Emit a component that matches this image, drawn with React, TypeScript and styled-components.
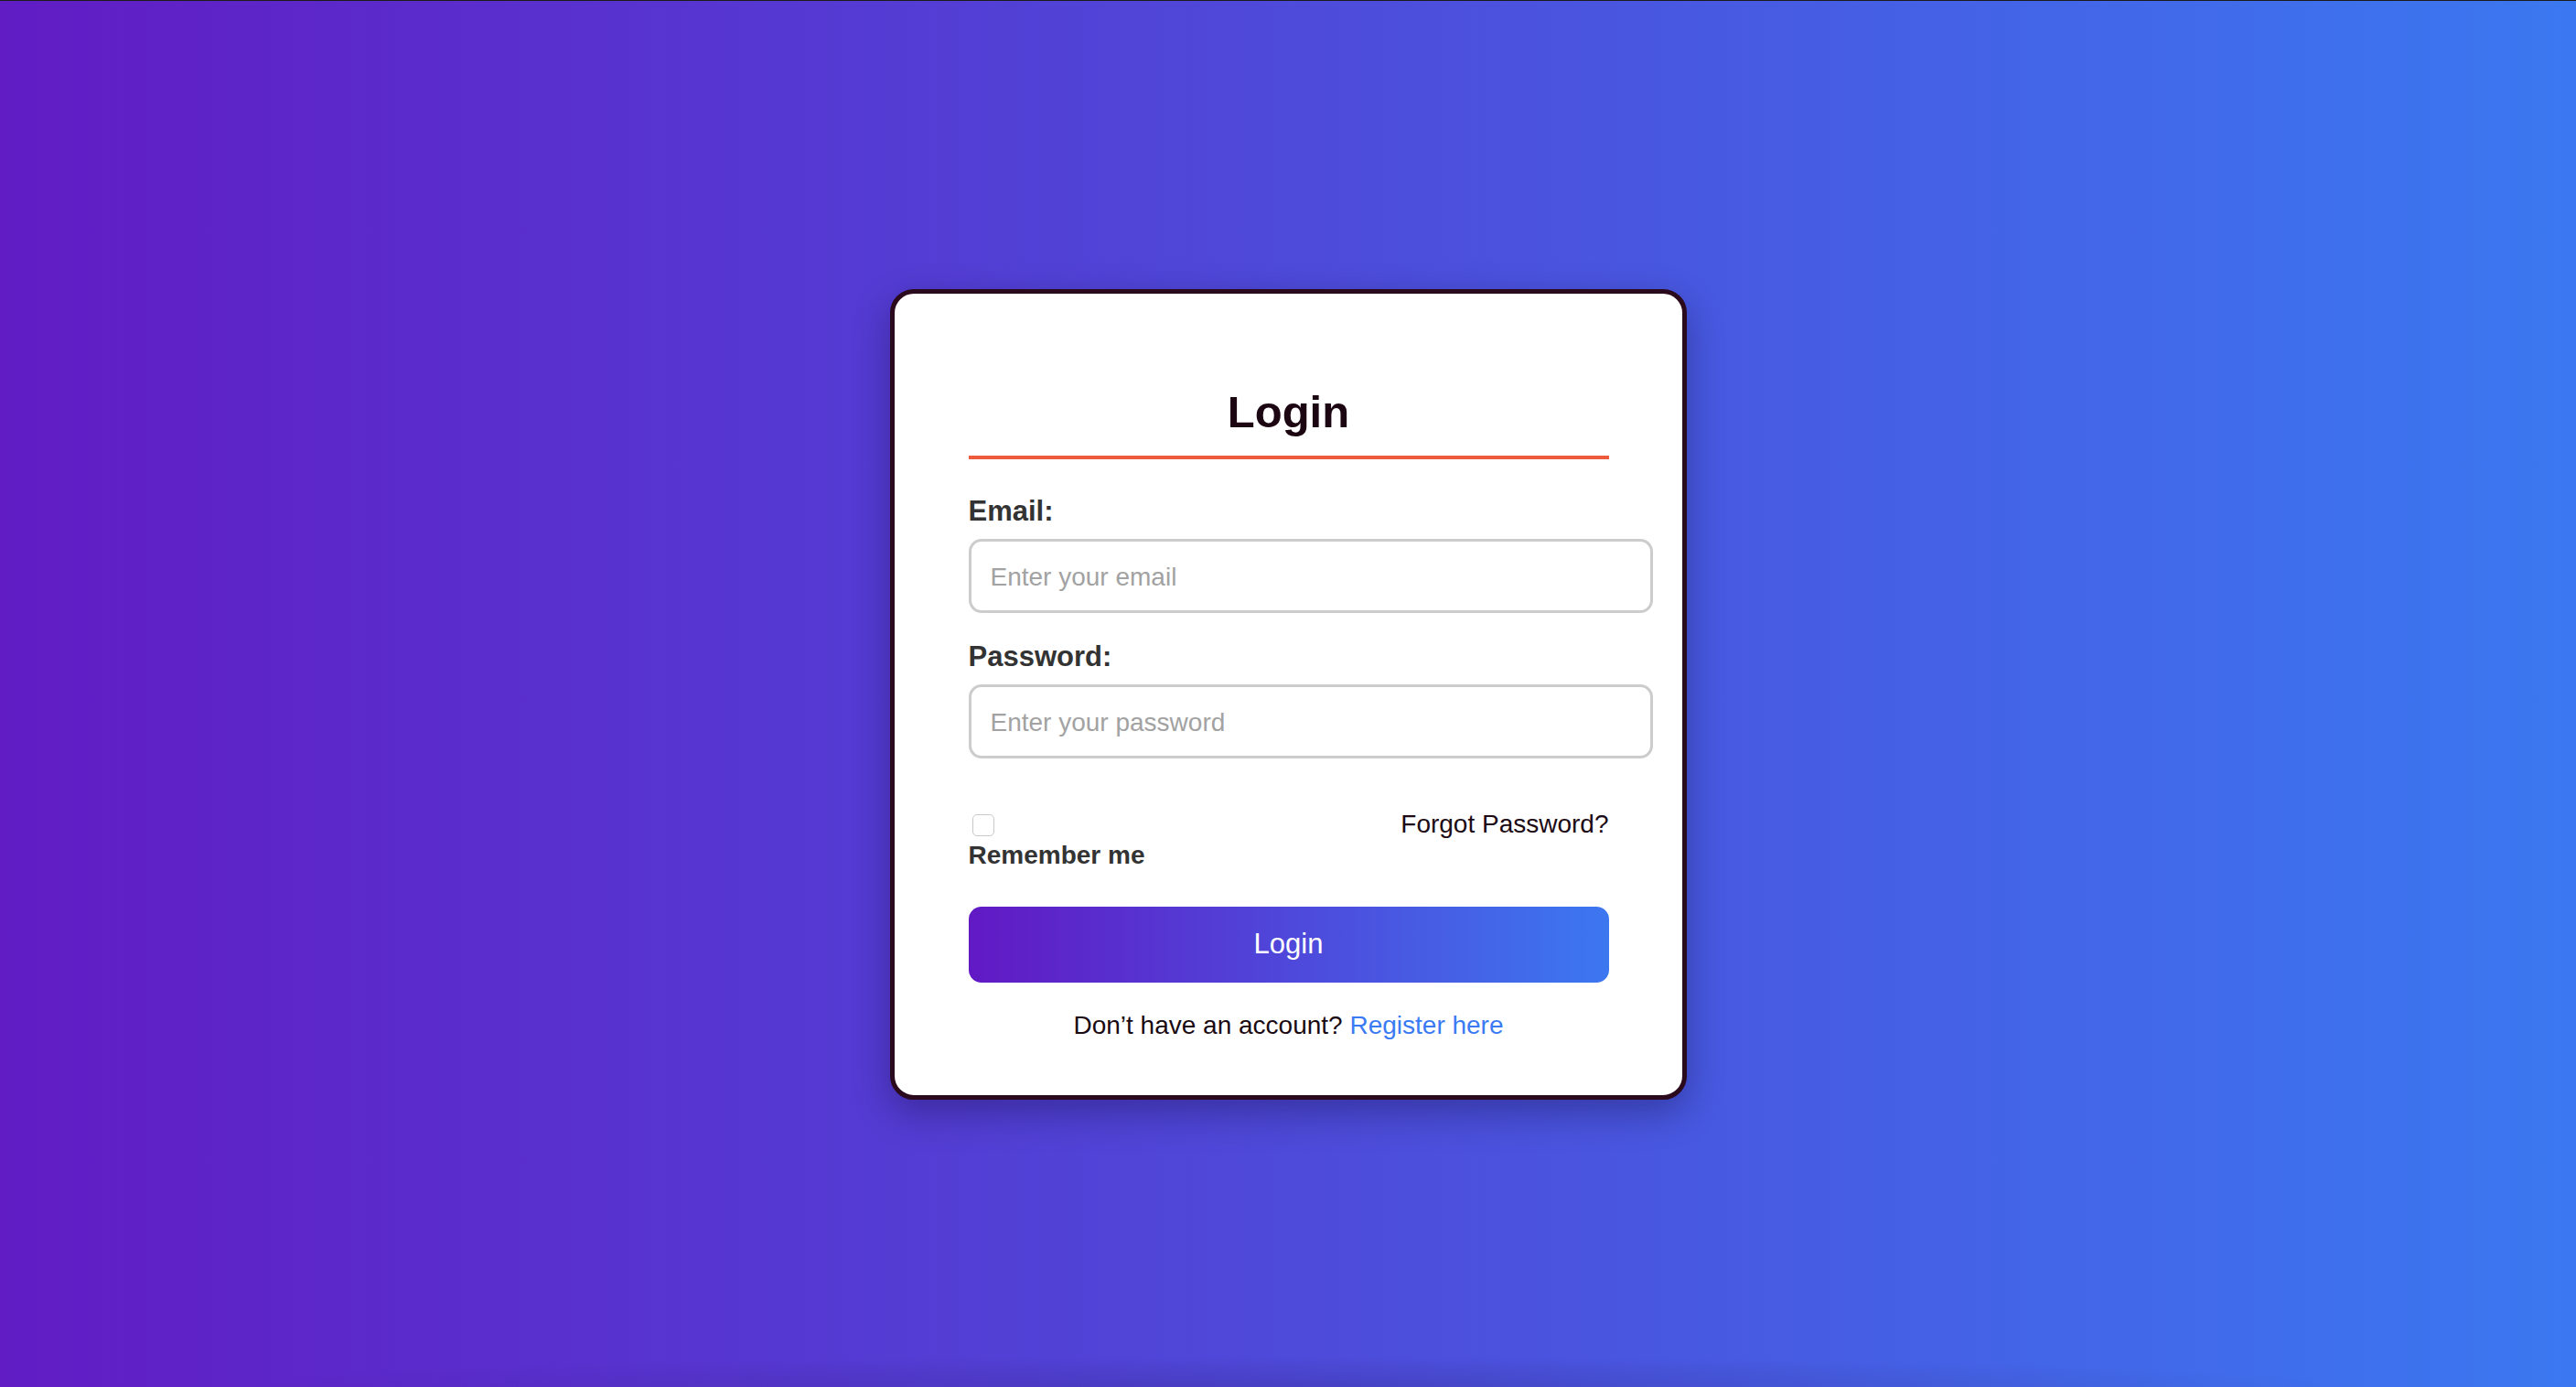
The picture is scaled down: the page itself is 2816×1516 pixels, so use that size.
import React from "react";
import styled, { createGlobalStyle } from "styled-components";

const GlobalStyle = createGlobalStyle`
  *, *::before, *::after { box-sizing: border-box; }
  html, body { margin: 0; padding: 0; }
  body {
    font-family: "Liberation Sans", Arial, Helvetica, sans-serif;
  }
`;

const Page = styled.main`
  min-height: 100vh;
  display: flex;
  align-items: center;
  justify-content: center;
  border-top: 1px solid #1c1c1c;
  background:
    radial-gradient(ellipse 42% 34px at 50% 100%, rgba(30, 10, 70, 0.16), rgba(30, 10, 70, 0) 100%),
    linear-gradient(to right, #611cc4, #3b78f0);
`;

const Card = styled.section`
  width: 871px;
  background: #ffffff;
  border: 5px solid #2a0a1c;
  border-radius: 26px;
  padding: 101px 80px 60px 81px;
  box-shadow: 0 14px 40px rgba(10, 0, 40, 0.32);
  display: flex;
  flex-direction: column;
`;

const Title = styled.h2`
  margin: 0;
  padding-bottom: 20px;
  border-bottom: 4px solid #ee5b3c;
  text-align: center;
  font-size: 49px;
  line-height: 56px;
  font-weight: 700;
  color: #1c0611;
`;

const Form = styled.form`
  display: flex;
  flex-direction: column;
  margin-top: 39px;
`;

const Field = styled.div<{ $gap?: number }>`
  display: flex;
  flex-direction: column;
  gap: 12px;
  margin-bottom: ${(p) => p.$gap ?? 0}px;
`;

const Label = styled.label`
  font-size: 31px;
  line-height: 36px;
  font-weight: 700;
  color: #333333;
`;

const Input = styled.input`
  width: calc(100% + 48px);
  height: 81px;
  padding: 3px 21px 0;
  border: 3px solid #cccccc;
  border-radius: 14px;
  background: #ffffff;
  font-family: "Liberation Sans", Arial, Helvetica, sans-serif;
  font-size: 28px;
  color: #222222;
  outline: none;
  &::placeholder {
    color: #a2a2a2;
  }
`;

const OptionsRow = styled.div`
  display: flex;
  justify-content: space-between;
  align-items: flex-start;
  margin-top: 56px;
`;

const RememberGroup = styled.div`
  display: flex;
  flex-direction: column;
  align-items: flex-start;
`;

const Checkbox = styled.input.attrs({ type: "checkbox" })`
  appearance: none;
  -webkit-appearance: none;
  width: 24px;
  height: 24px;
  margin: 5px 0 5px 4px;
  border: 1.5px solid #c9c9c9;
  border-radius: 5px;
  background: #ffffff;
`;

const RememberLabel = styled.label`
  font-size: 28px;
  line-height: 32px;
  font-weight: 700;
  color: #333333;
`;

const ForgotLink = styled.a`
  font-size: 28px;
  line-height: 32px;
  color: #1c0a14;
  text-decoration: none;
`;

const SubmitButton = styled.button`
  margin-top: 40px;
  width: 100%;
  height: 83px;
  border: none;
  border-radius: 14px;
  background: linear-gradient(to right, #6119c4, #3c77f0);
  color: #ffffff;
  font-family: "Liberation Sans", Arial, Helvetica, sans-serif;
  font-size: 31px;
  cursor: pointer;
`;

const Footer = styled.p`
  margin: 31px 0 0;
  text-align: center;
  font-size: 28px;
  line-height: 32px;
  color: #1a0a12;
`;

const RegisterLink = styled.a`
  color: #3a7af3;
  text-decoration: none;
`;

export default function App() {
  return (
    <>
      <GlobalStyle />
      <Page>
        <Card>
          <Title>Login</Title>
          <Form onSubmit={(e) => e.preventDefault()}>
            <Field $gap={30}>
              <Label htmlFor="email">Email:</Label>
              <Input id="email" type="email" placeholder="Enter your email" />
            </Field>
            <Field>
              <Label htmlFor="password">Password:</Label>
              <Input id="password" type="password" placeholder="Enter your password" />
            </Field>
            <OptionsRow>
              <RememberGroup>
                <Checkbox id="remember" />
                <RememberLabel htmlFor="remember">Remember me</RememberLabel>
              </RememberGroup>
              <ForgotLink href="#">Forgot Password?</ForgotLink>
            </OptionsRow>
            <SubmitButton type="submit">Login</SubmitButton>
            <Footer>
              Don’t have an account? <RegisterLink href="#">Register here</RegisterLink>
            </Footer>
          </Form>
        </Card>
      </Page>
    </>
  );
}
